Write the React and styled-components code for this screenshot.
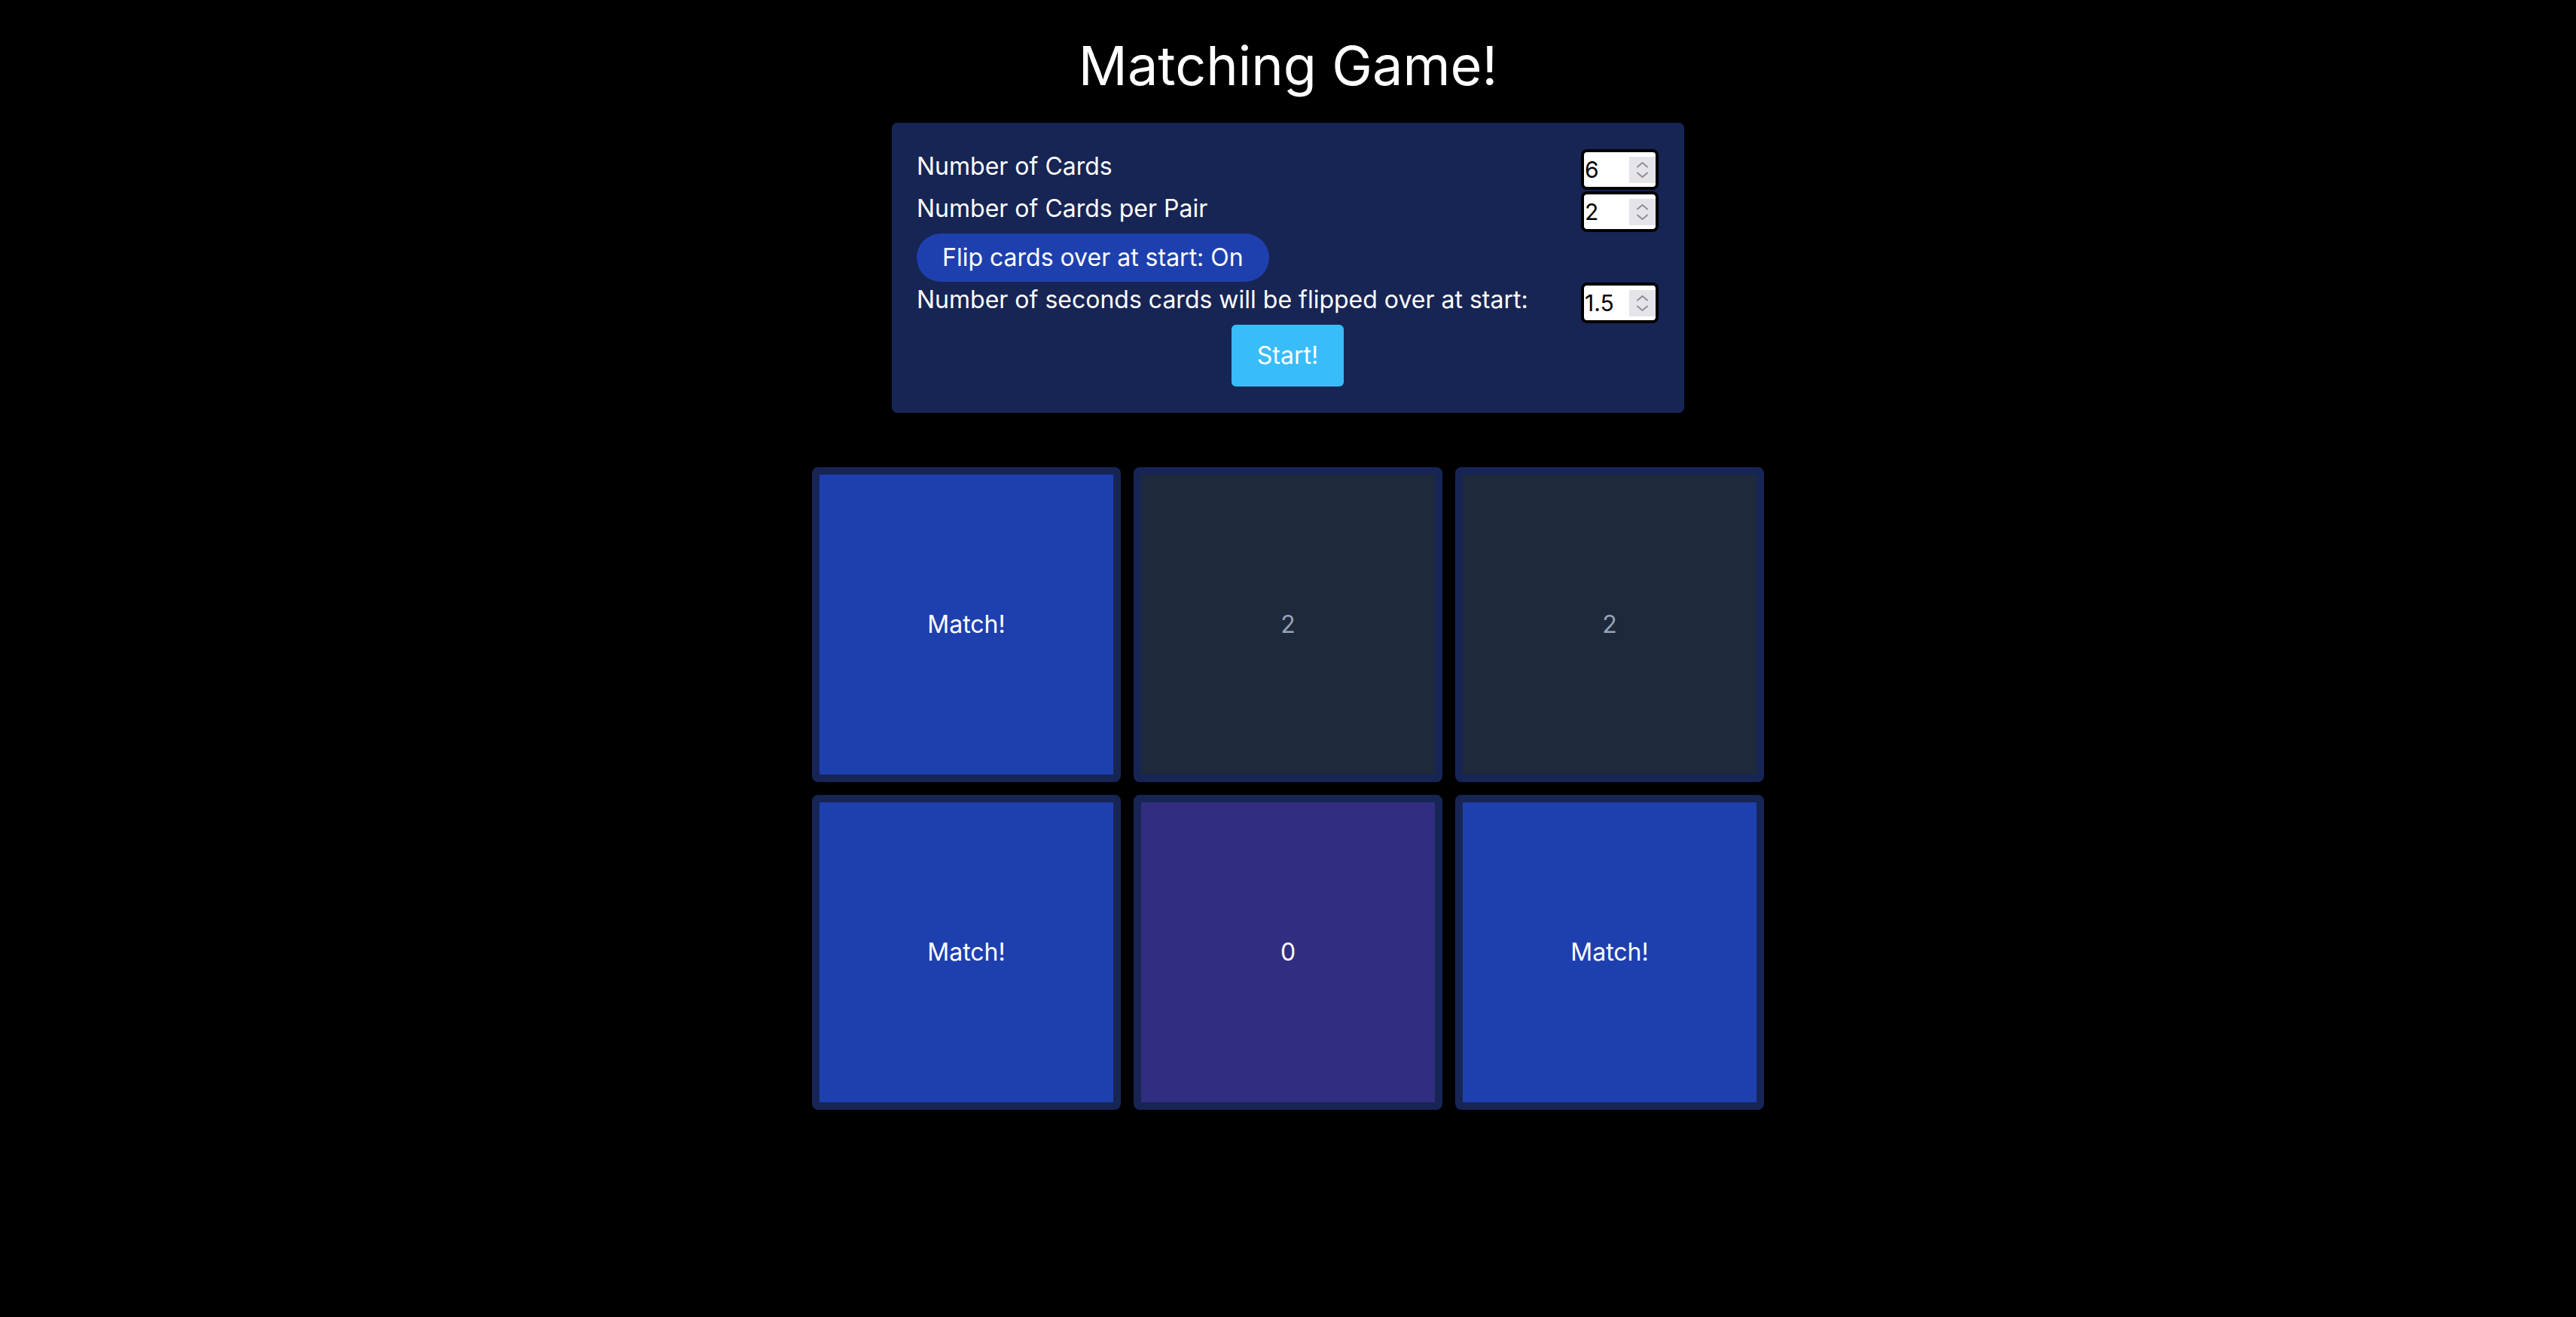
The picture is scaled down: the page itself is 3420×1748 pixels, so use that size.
import React, { useState } from "react";
import styled, { createGlobalStyle } from "styled-components";

const GlobalStyle = createGlobalStyle`
  html, body {
    margin: 0;
    padding: 0;
    background: #000;
  }
  body {
    font-family: Inter, "Noto Sans", sans-serif;
    color: #fff;
  }
  * {
    box-sizing: border-box;
  }
`;

const cards = [
  { kind: "matched", label: "Match!" },
  { kind: "hidden", label: "2" },
  { kind: "hidden", label: "2" },
  { kind: "matched", label: "Match!" },
  { kind: "selected", label: "0" },
  { kind: "matched", label: "Match!" },
];

const Spinner = () => (
  <SpinBox>
    <svg width="35" height="35" viewBox="0 0 35 35" fill="none">
      <path d="M11 13.5 L17.5 8 L24 13.5" stroke="#8e8e93" strokeWidth="2" strokeLinecap="round" strokeLinejoin="round" />
      <path d="M11 21.5 L17.5 27 L24 21.5" stroke="#8e8e93" strokeWidth="2" strokeLinecap="round" strokeLinejoin="round" />
    </svg>
  </SpinBox>
);

const NumberInput = ({ value, onChange }) => (
  <Field>
    <FieldInput type="text" value={value} onChange={(e) => onChange(e.target.value)} />
    <Spinner />
  </Field>
);

const App = () => {
  const [count, setCount] = useState("6");
  const [perPair, setPerPair] = useState("2");
  const [flip, setFlip] = useState(true);
  const [seconds, setSeconds] = useState("1.5");

  return (
    <>
      <GlobalStyle />
      <Page>
        <Title>Matching Game!</Title>
        <Settings>
          <Row>
            <Label>Number of Cards</Label>
            <NumberInput value={count} onChange={setCount} />
          </Row>
          <Row>
            <Label>Number of Cards per Pair</Label>
            <NumberInput value={perPair} onChange={setPerPair} />
          </Row>
          <Toggle onClick={() => setFlip(!flip)}>Flip cards over at start: {flip ? "On" : "Off"}</Toggle>
          <Row>
            <Label>Number of seconds cards will be flipped over at start:</Label>
            <NumberInput value={seconds} onChange={setSeconds} />
          </Row>
          <StartButton>Start!</StartButton>
        </Settings>
        <Board>
          {cards.map((card, i) => (
            <Card key={i} $kind={card.kind}>
              {card.label}
            </Card>
          ))}
        </Board>
      </Page>
    </>
  );
};
export default App;

const Page = styled.div`
  display: flex;
  flex-direction: column;
  align-items: center;
  min-height: 1748px;
  padding-top: 47px;
`;

const Title = styled.h1`
  margin: 0;
  font-size: 72px;
  line-height: 80px;
  font-weight: 400;
  color: #fff;
`;

const Settings = styled.div`
  display: flex;
  flex-direction: column;
  align-items: flex-start;
  width: 1052px;
  margin-top: 36px;
  padding: 34px 34px 35px 33px;
  background-color: #172554;
  border-radius: 7px;
`;

const Row = styled.div`
  display: flex;
  justify-content: space-between;
  align-items: flex-start;
  width: 100%;
`;

const Label = styled.span`
  font-size: 32px;
  line-height: 48px;
  color: #fff;
`;

const Field = styled.div`
  display: flex;
  align-items: center;
  width: 103px;
  height: 54px;
  margin: 1px 0;
  border: 4px solid #000;
  border-radius: 8px;
  background: #fff;
  overflow: hidden;
`;

const FieldInput = styled.input`
  flex: 1;
  min-width: 0;
  height: 100%;
  padding: 0 0 0 1px;
  border: none;
  outline: none;
  background: transparent;
  color: #000;
  font-family: Inter, "Noto Sans", sans-serif;
  font-size: 30px;
`;

const SpinBox = styled.span`
  display: flex;
  width: 35px;
  height: 35px;
  background: #e4e4e9;
`;

const Toggle = styled.button`
  margin: 1px 0 0;
  padding: 8px 34px;
  border: none;
  border-radius: 9999px;
  background-color: #1e40af;
  color: #fff;
  font-family: Inter, "Noto Sans", sans-serif;
  font-size: 32px;
  line-height: 48px;
  cursor: pointer;
`;

const StartButton = styled.button`
  align-self: center;
  margin-top: 1px;
  padding: 17px 34px;
  border: none;
  border-radius: 6px;
  background-color: #38bdf8;
  color: #fff;
  font-family: Inter, "Noto Sans", sans-serif;
  font-size: 32px;
  line-height: 48px;
  cursor: pointer;
`;

const Board = styled.div`
  display: grid;
  grid-template-columns: repeat(3, 410px);
  grid-auto-rows: 418px;
  gap: 17px;
  margin-top: 72px;
`;

const cardColors = {
  matched: { bg: "#1e40af", fg: "#fff" },
  hidden: { bg: "#1e293b", fg: "#94a3b8" },
  selected: { bg: "#312e81", fg: "#fff" },
};

const Card = styled.div`
  display: flex;
  align-items: center;
  justify-content: center;
  border: 10px solid #172554;
  border-radius: 8px;
  background-clip: padding-box;
  background-color: ${(p) => cardColors[p.$kind].bg};
  color: ${(p) => cardColors[p.$kind].fg};
  font-size: 32px;
  line-height: 48px;
`;
